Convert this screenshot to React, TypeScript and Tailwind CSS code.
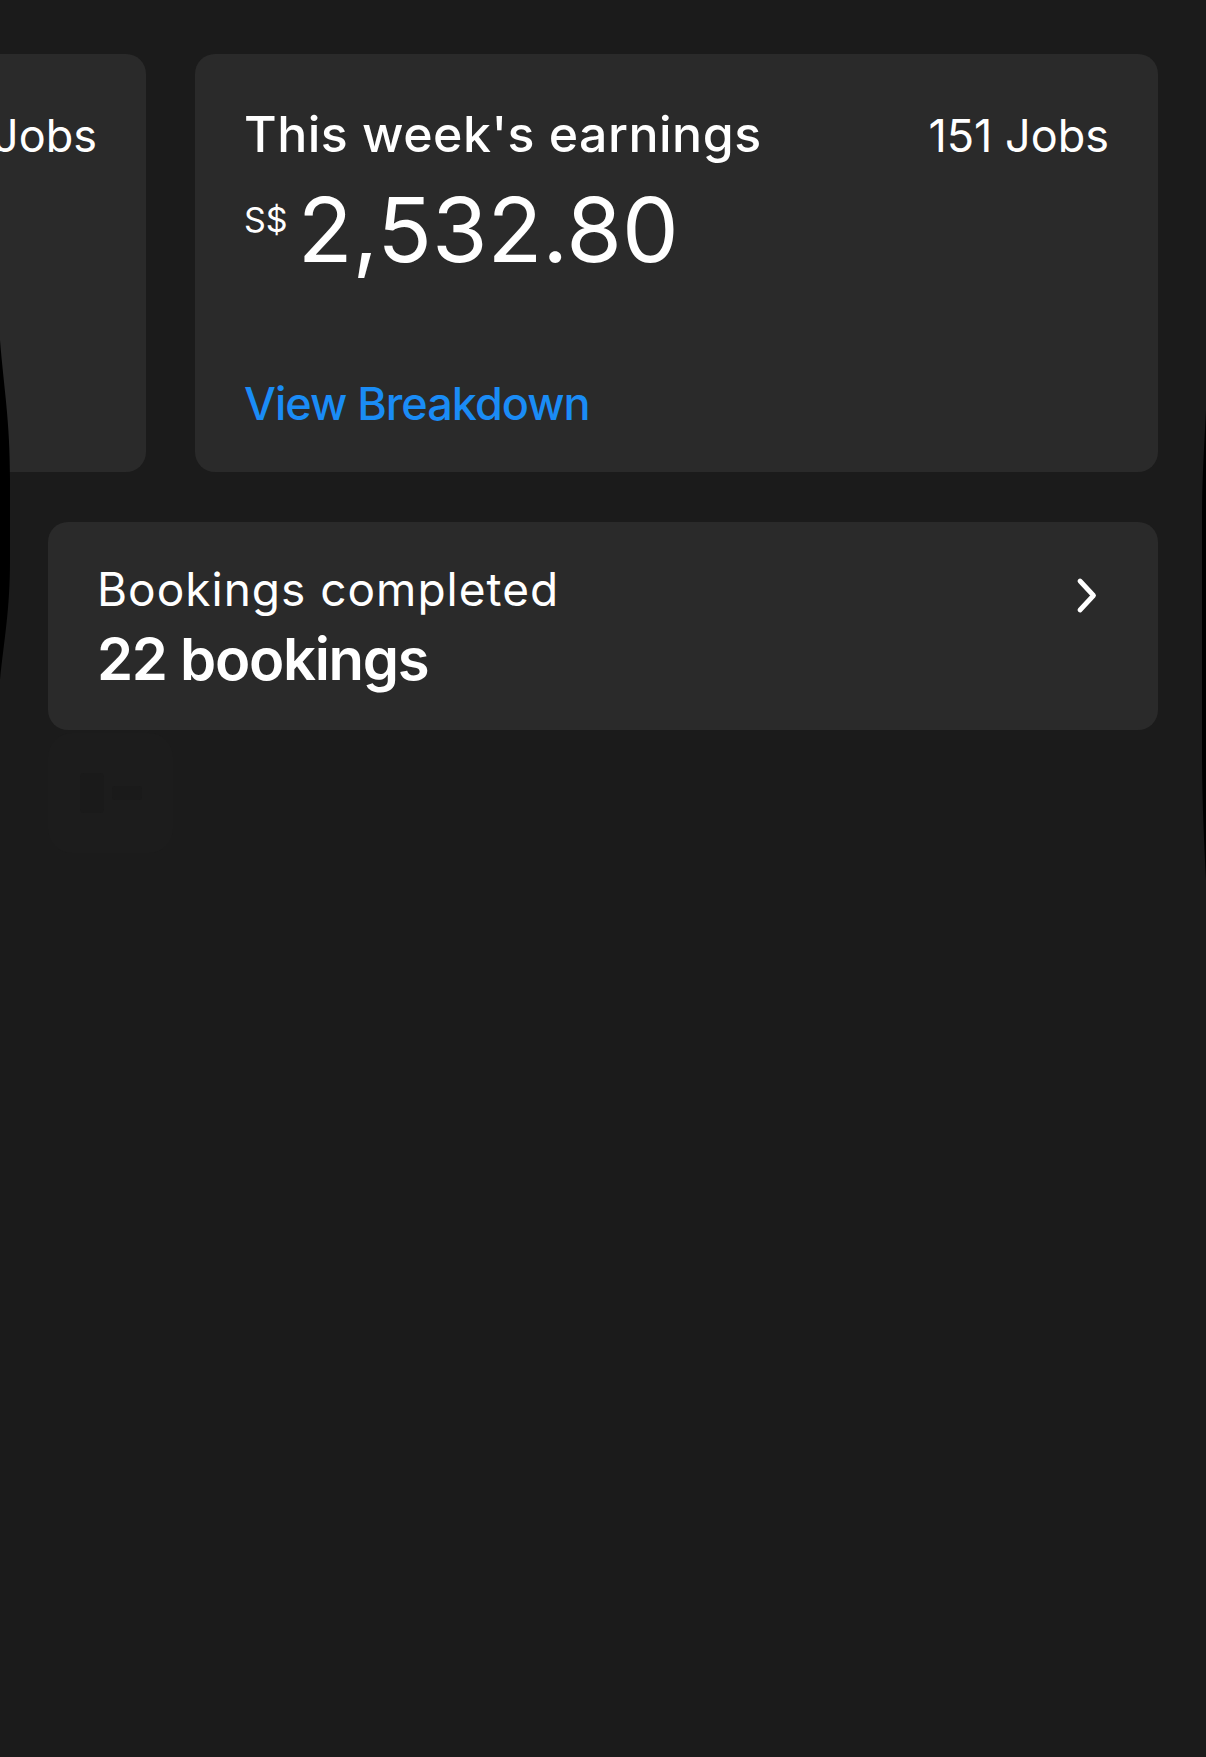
type EarningsCard = {
  title: string;
  jobs: number;
  currency: string;
  amount: string;
};

const cards: EarningsCard[] = [
  { title: "Last week's earnings", jobs: 138, currency: "S$", amount: "2,104.50" },
  { title: "This week's earnings", jobs: 151, currency: "S$", amount: "2,532.80" },
];

function EarningsCardView({ card }: { card: EarningsCard }) {
  return (
    <div className="flex h-[418px] w-[963px] shrink-0 flex-col rounded-[20px] bg-[#2a2a2a] px-[49px] pt-[50px] pb-[41px]">
      <div className="flex items-baseline justify-between">
        <h2 className="text-[50px] leading-[60px] font-medium tracking-[0.5px] text-white">{card.title}</h2>
        <span className="text-[45px] leading-[60px] text-white">{card.jobs} Jobs</span>
      </div>

      <div className="mt-[19px] flex items-start gap-[10px] text-white">
        <span className="mt-[18px] text-[34px] leading-none">{card.currency}</span>
        <span className="text-[90px] leading-none">{card.amount}</span>
      </div>

      <button className="mt-auto self-start text-[45px] leading-[54px] font-medium tracking-[-1px] text-[#1a8cf6]">
        View Breakdown
      </button>
    </div>
  );
}

export default function App() {
  return (
    <main
      className="relative min-h-[1757px] w-full overflow-hidden bg-[#1b1b1b] pt-[54px]"
      style={{ fontFamily: "Inter, 'Noto Sans', sans-serif" }}
    >
      {/* Earnings carousel, scrolled to the current week */}
      <div className="ml-[-817px] flex gap-[49px]">
        {cards.map((card) => (
          <EarningsCardView key={card.title} card={card} />
        ))}
      </div>

      {/* Bookings summary */}
      <div className="mx-[48px] mt-[50px] flex h-[208px] items-start justify-between rounded-[20px] bg-[#2a2a2a] pl-[49px] pr-[60px] pt-[40px]">
        <div className="flex flex-col">
          <span className="text-[46px] leading-[54px] tracking-[1px] text-white">Bookings completed</span>
          <span className="mt-[8px] text-[58px] leading-[70px] font-semibold tracking-[-1.3px] text-white">
            22 bookings
          </span>
        </div>
        <svg className="mt-[15px] h-[37px] w-[22px]" viewBox="0 0 22 37" fill="none">
          <path
            d="M4 4 L17.5 18.5 L4 33"
            stroke="white"
            strokeWidth={4.8}
            strokeLinecap="round"
            strokeLinejoin="round"
          />
        </svg>
      </div>

      <div className="ml-[48px] mt-[3px] flex h-[120px] w-[125px] items-center justify-center gap-[8px] rounded-[24px] bg-[#1c1c1c]">
        <div className="h-[40px] w-[24px] rounded-[4px] bg-[#1a1a1a]" />
        <div className="h-[14px] w-[30px] rounded-[3px] bg-[#1a1a1a]" />
      </div>

      {/* curved device edges */}
      <svg className="pointer-events-none absolute left-0 top-[340px] h-[350px] w-[14px]" viewBox="0 0 14 350">
        <path d="M0 0 C4 50 10 80 10 140 L10 220 C10 270 4 300 0 340 Z" fill="#000" />
      </svg>
      <svg className="pointer-events-none absolute right-0 top-[410px] h-[480px] w-[18px]" viewBox="0 0 18 480">
        <path d="M18 0 C16 40 14 70 14 110 L14 340 C14 390 16 430 18 470 Z" fill="#000" />
      </svg>
    </main>
  );
}
